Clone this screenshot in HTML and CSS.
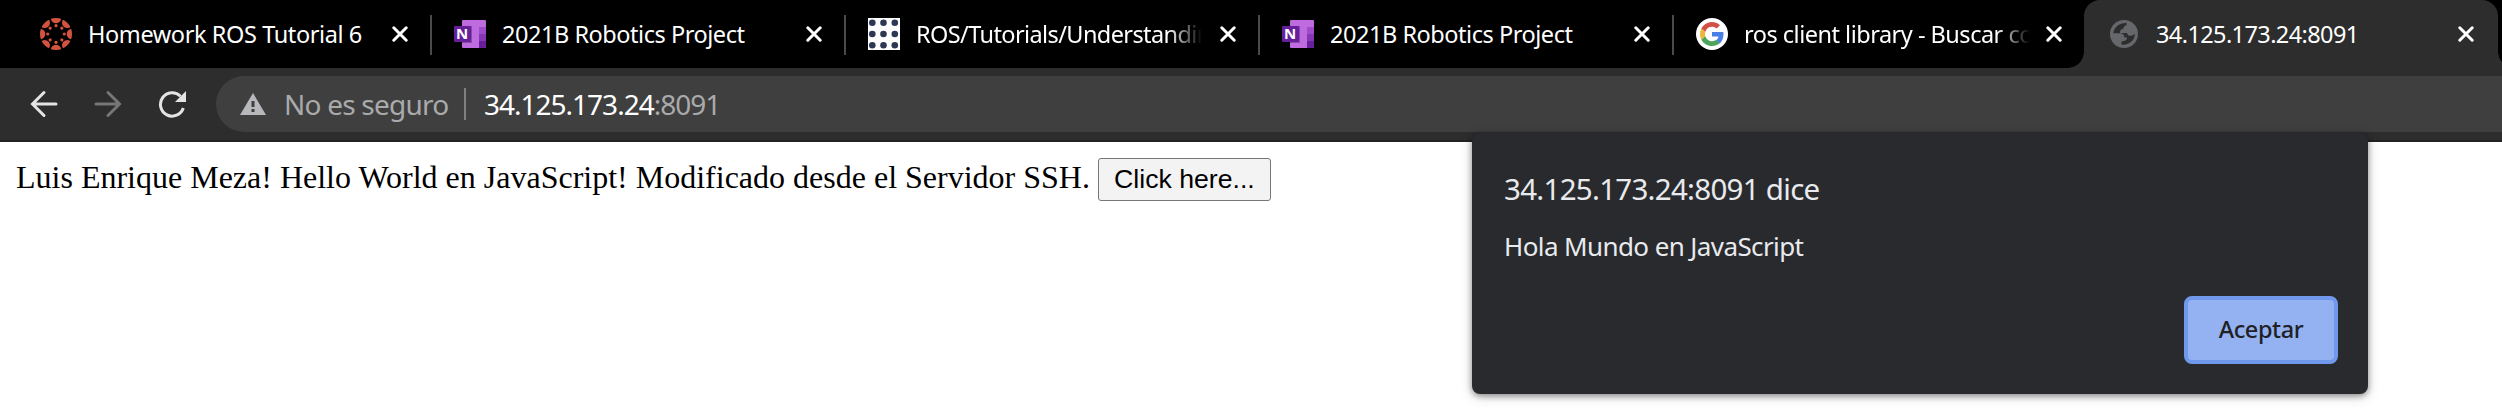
FILE: index.html
```html
<!DOCTYPE html>
<html lang="es">
<head>
<meta charset="utf-8">
<title>34.125.173.24:8091</title>
<link rel="stylesheet" href="styles.css">
</head>
<body>
<svg class="defs" aria-hidden="true">
  <symbol id="close" viewBox="0 0 16 16"><path d="M1.800 1.800 14.200 14.200M14.200 1.800 1.800 14.200" fill="none" stroke="#fff" stroke-width="3" stroke-linecap="round"/></symbol>
  <symbol id="onenote" viewBox="0 0 32 32">
    <rect x="8" y="2" width="24" height="28" rx="1" fill="#bf6be0"/>
    <path d="M25 9h7v7h-7z" fill="#a04cca"/><path d="M25 16h7v7h-7z" fill="#8537b5"/><path d="M25 23h7v6a1 1 0 0 1-1 1h-6z" fill="#66209c"/>
    <path d="M8 8h10v17H8z" fill="#8a48a8"/>
    <rect x="0" y="8" width="17" height="16" rx="1" fill="#66209c"/>
  </symbol>
</svg>
<header class="tabs">
  <div class="tab">
    <svg class="icon" viewBox="0 0 32 32">
      <defs><clipPath id="disc"><circle cx="16" cy="16" r="16"/></clipPath>
      <g id="lobe"><circle cx="16" cy="0" r="5.300"/><circle cx="16" cy="7.700" r="1.600"/></g></defs>
      <g fill="#d2533f" clip-path="url(#disc)">
        <use href="#lobe"/><use href="#lobe" transform="rotate(45 16 16)"/><use href="#lobe" transform="rotate(90 16 16)"/><use href="#lobe" transform="rotate(135 16 16)"/><use href="#lobe" transform="rotate(180 16 16)"/><use href="#lobe" transform="rotate(225 16 16)"/><use href="#lobe" transform="rotate(270 16 16)"/><use href="#lobe" transform="rotate(315 16 16)"/>
      </g>
    </svg>
    <span class="title t-home">Homework ROS Tutorial 6</span>
    <svg class="close"><use href="#close"/></svg>
  </div>
  <div class="tab">
    <svg class="icon" viewBox="0 0 32 32"><use href="#onenote" width="32" height="32"/><text x="8.200" y="21.200" class="n-letter">N</text></svg>
    <span class="title t-note">2021B Robotics Project</span>
    <svg class="close"><use href="#close"/></svg>
  </div>
  <div class="tab">
    <svg class="icon" viewBox="0 0 32 32"><path fill="#fff" d="M0 0h32v32H0z"/>
      <g fill="#2c3854"><circle cx="4.3" cy="4.7" r="3.3"/><circle cx="15.5" cy="4.7" r="3.3"/><circle cx="26.8" cy="4.7" r="3.3"/><circle cx="4.3" cy="16" r="3.3"/><circle cx="15.5" cy="16" r="3.3"/><circle cx="26.8" cy="16" r="3.3"/><circle cx="4.3" cy="27.3" r="3.3"/><circle cx="15.5" cy="27.3" r="3.3"/><circle cx="26.8" cy="27.3" r="3.3"/></g></svg>
    <span class="title faded t-ros">ROS/Tutorials/Understandin</span>
    <svg class="close"><use href="#close"/></svg>
  </div>
  <div class="tab">
    <svg class="icon" viewBox="0 0 32 32"><use href="#onenote" width="32" height="32"/><text x="8.200" y="21.200" class="n-letter">N</text></svg>
    <span class="title t-note">2021B Robotics Project</span>
    <svg class="close"><use href="#close"/></svg>
  </div>
  <div class="tab before-active">
    <svg class="icon" viewBox="0 0 32 32"><circle cx="16" cy="16" r="16" fill="#fff"/>
      <g transform="translate(4 4)">
        <path fill="#4a7fe8" d="M23.5 12.3c0-.9-.1-1.5-.2-2.2H12v4.5h6.5c-.3 1.700-1.300 3.100-2.700 4l3.900 3c2.400-2.200 3.800-5.400 3.800-9.300z"/>
        <path fill="#4fa45c" d="M12 24c3.200 0 6-1.100 7.900-2.900l-3.900-3c-1 .7-2.400 1.200-4 1.200-3.100 0-5.800-2.100-6.700-5l-4 3.100C3.300 21.300 7.300 24 12 24z"/>
        <path fill="#eeb63a" d="M5.300 14.300a7.400 7.400 0 0 1 0-4.600l-4-3.100a12 12 0 0 0 0 10.800z"/>
        <path fill="#d44f44" d="M12 4.800c1.800 0 3.300.6 4.600 1.800L20 3.200A12 12 0 0 0 1.300 6.600l4 3.100c.9-2.900 3.600-4.900 6.700-4.900z"/>
      </g></svg>
    <span class="title faded t-google">ros client library - Buscar co</span>
    <svg class="close"><use href="#close"/></svg>
  </div>
  <div class="tab active">
    <svg class="icon" viewBox="0 0 32 32"><circle cx="16" cy="16" r="14" fill="#65676b"/>
      <path fill="#2d2d2d" d="M18.500 4.700 16 5.200C10.500 5.500 6 9.700 5.300 15.200H11.500C15 15.200 16.300 17 16.500 19.500H19C19 22 17.500 23 13.500 23.500V26.500C20.500 27.700 26.800 22.500 26.800 16L23.500 17.800C21 18 19.500 17.300 19 15H12C12 12 13 11.500 15.500 10.500C15.700 8.500 16.500 7.700 18.500 7.200Z"/></svg>
    <span class="title t-ip">34.125.173.24:8091</span>
    <svg class="close"><use href="#close"/></svg>
  </div>
</header>
<nav class="toolbar">
  <svg class="nav" viewBox="0 0 28 28"><path d="M26 14H3M14 2.500 2.500 14 14 25.500" fill="none" stroke="#e4e4e4" stroke-width="3" stroke-linecap="round"/></svg>
  <svg class="nav" viewBox="0 0 28 28"><path d="M2 14H25M14 2.500 25.500 14 14 25.500" fill="none" stroke="#767676" stroke-width="3" stroke-linecap="round"/></svg>
  <svg class="nav" viewBox="0 0 28 28"><path d="M25.300 18A11.700 11.700 0 1 1 22.500 6.200" fill="none" stroke="#e4e4e4" stroke-width="3"/><path d="M28 1V12H17Z" fill="#e4e4e4"/></svg>
  <div class="omnibox">
    <svg class="warn" viewBox="0 0 26 22"><path d="M13 0 26 22H0Z" fill="#b6b8bc"/><path d="M11.500 8h3v6h-3zM11.500 16h3v3h-3z" fill="#3f3f3f"/></svg>
    <span class="insecure">No es seguro</span>
    <span class="url">34.125.173.24<span class="port">:8091</span></span>
  </div>
</nav>
<main class="page">Luis Enrique Meza! Hello World en JavaScript! Modificado desde el Servidor SSH. <button class="click">Click here...</button></main>
<section class="dialog">
  <h1 class="origin">34.125.173.24:8091 dice</h1>
  <p class="message">Hola Mundo en JavaScript</p>
  <button class="accept"><span>Aceptar</span></button>
</section>
</body>
</html>
```
FILE: styles.css
```css
* { box-sizing: border-box; }
body {
  margin: 0;
  width: 2502px;
  height: 419px;
  overflow: hidden;
  background: #fff;
  font-family: "Noto Sans", "Open Sans", sans-serif;
}
.defs { position: absolute; width: 0; height: 0; }
.n-letter { font: 700 15px "Noto Sans", sans-serif; fill: #fff; text-anchor: middle; }

.tabs { display: flex; height: 68px; padding-left: 18px; background: #000; }
.tab {
  display: flex;
  align-items: center;
  flex: none;
  width: 414px;
  height: 68px;
  padding-left: 22px;
  background: linear-gradient(#4b4b4b, #4b4b4b) right 15px / 2px 40px no-repeat;
}
.before-active { width: 410px; background: none; }
.active {
  position: relative;
  padding-left: 24px;
  border-radius: 16px 16px 0 0;
  background: #2d2d2d;
}
.active::before, .active::after {
  content: "";
  position: absolute;
  bottom: 0;
  width: 16px;
  height: 16px;
}
.active::before { left: -16px; background: radial-gradient(circle at 0 0, transparent 15.500px, #2d2d2d 16px); }
.active::after { right: -16px; background: radial-gradient(circle at 100% 0, transparent 15.500px, #2d2d2d 16px); }
.icon { flex: none; width: 32px; height: 32px; }
.title {
  flex: none;
  width: 288px;
  margin: 0 16px;
  overflow: hidden;
  white-space: nowrap;
  color: #fff;
  font-size: 23.5px;
  line-height: 34px;
}
.active .title, .before-active .title { width: 286px; }
.faded { -webkit-mask-image: linear-gradient(90deg, #000 252px, transparent 286px); mask-image: linear-gradient(90deg, #000 252px, transparent 286px); }
.close { flex: none; width: 16px; height: 16px; }
.t-home { letter-spacing: -0.4px; }
.t-note { letter-spacing: -0.46px; }
.t-google { letter-spacing: -0.5px; }
.t-ros, .t-ip { letter-spacing: -0.6px; }

.toolbar {
  display: flex;
  align-items: center;
  gap: 36px;
  height: 74px;
  padding: 8px 0 8px 30px;
  background: #2d2d2d;
  border-bottom: 2px solid #222;
}
.nav { flex: none; width: 28px; height: 28px; }
.omnibox {
  display: flex;
  align-items: center;
  flex: 1;
  height: 56px;
  margin-left: -6px;
  padding-left: 24px;
  border-radius: 28px 0 0 28px;
  background: #3f3f3f;
  font-size: 28px;
  line-height: 40px;
  white-space: nowrap;
}
.warn { flex: none; width: 26px; height: 22px; }
.insecure {
  width: 182px;
  margin-left: 18px;
  background: linear-gradient(#808080, #808080) right center / 2px 32px no-repeat;
  color: #a9aaac;
  letter-spacing: -0.77px;
}
.url { margin-left: 18px; color: #fff; letter-spacing: -1px; }
.port { color: #a9aaac; }

.page {
  padding: 16px;
  color: #000;
  font: 32px "Liberation Serif", serif;
  white-space: nowrap;
}
.click {
  width: 173px;
  height: 43px;
  margin: 0;
  padding: 0;
  border: 1px solid #767676;
  border-radius: 3px;
  background: #f3f3f3;
  color: #000;
  font: 26.67px "Liberation Sans", sans-serif;
}

.dialog {
  position: absolute;
  left: 1472px;
  top: 133px;
  display: flex;
  flex-direction: column;
  width: 896px;
  height: 261px;
  padding: 35px 30px 30px 32px;
  border-radius: 8px;
  background: #292a2d;
  box-shadow: 0 2px 6px rgba(0, 0, 0, .4), 0 2px 14px rgba(0, 0, 0, .16);
  color: #e8eaed;
}
.origin { margin: 0; font-size: 29.5px; font-weight: 400; line-height: 42px; letter-spacing: -0.72px; }
.message { margin: 18px 0 0; font-size: 26px; line-height: 36px; letter-spacing: -0.6px; }
.accept {
  align-self: flex-end;
  width: 154px;
  height: 68px;
  margin-top: auto;
  padding: 0 0 2px;
  border: 4px solid #7099ed;
  border-radius: 8px;
  background: #94b2f2;
  color: #202124;
  font: 500 23.5px "Noto Sans", sans-serif;
  letter-spacing: -0.4px;
}
```
